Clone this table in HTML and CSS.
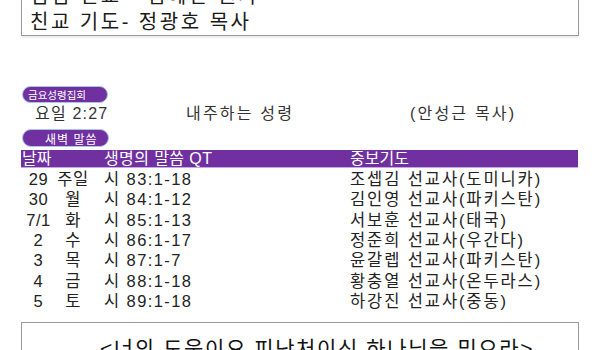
FILE: index.html
```html
<!DOCTYPE html>
<html lang="ko">
<head>
<meta charset="utf-8">
<link rel="stylesheet" href="styles.css">
</head>
<body>
<div class="page">
  <div class="notice">
    <div>점심 친교 - 김혜란 권사</div>
    <div>친교 기도- 정광호 목사</div>
  </div>

  <div class="pill pill-fri">금요성령집회</div>
  <div class="fri-row">
    <span class="fri-ref">요일 2:27</span>
    <span class="fri-title">내주하는 성령</span>
    <span class="fri-speaker">(안성근 목사)</span>
  </div>

  <div class="pill pill-dawn">새벽 말씀</div>
  <div class="qt">
    <div class="qt-head">
      <span class="h-date">날짜</span>
      <span class="h-verse">생명의 말씀 QT</span>
      <span class="h-pray">중보기도</span>
    </div>
    <div class="qt-row"><span class="c-num">29</span><span class="c-day">주일</span><span class="c-verse">시 83:1-18</span><span class="c-pray">조셉김 선교사(도미니카)</span></div>
    <div class="qt-row"><span class="c-num">30</span><span class="c-day">월</span><span class="c-verse">시 84:1-12</span><span class="c-pray">김인영 선교사(파키스탄)</span></div>
    <div class="qt-row"><span class="c-num">7/1</span><span class="c-day">화</span><span class="c-verse">시 85:1-13</span><span class="c-pray">서보훈 선교사(태국)</span></div>
    <div class="qt-row"><span class="c-num">2</span><span class="c-day">수</span><span class="c-verse">시 86:1-17</span><span class="c-pray">정준희 선교사(우간다)</span></div>
    <div class="qt-row"><span class="c-num">3</span><span class="c-day">목</span><span class="c-verse">시 87:1-7</span><span class="c-pray">윤갈렙 선교사(파키스탄)</span></div>
    <div class="qt-row"><span class="c-num">4</span><span class="c-day">금</span><span class="c-verse">시 88:1-18</span><span class="c-pray">황충열 선교사(온두라스)</span></div>
    <div class="qt-row"><span class="c-num">5</span><span class="c-day">토</span><span class="c-verse">시 89:1-18</span><span class="c-pray">하강진 선교사(중동)</span></div>
  </div>

  <div class="motto">&lt;너의 도움이요 피난처이신 하나님을 믿으라&gt;</div>
</div>
</body>
</html>
```
FILE: styles.css
```css
* { box-sizing: border-box; }
html, body { margin: 0; padding: 0; background: #fff; overflow: hidden; }
body {
  font-family: "Liberation Sans", "Noto Sans CJK KR", sans-serif;
  color: #222;
}
.page {
  width: 600px;
  height: 350px;
  padding: 0 21px;
  overflow: hidden;
}
.notice {
  margin-top: -19px;
  border: 1px solid #9a9a9a;
  box-shadow: 0 2px 2px rgba(0,0,0,0.08);
  padding: 1px 8px 0;
  font-size: 20px;
  line-height: 26px;
  letter-spacing: 2.5px;
  color: #1a1a1a;
  white-space: nowrap;
}
.pill {
  background: #7030a0;
  color: #fff;
  border: 1px solid #a9c6ea;
  border-radius: 10px;
  font-family: "Noto Sans CJK KR", sans-serif;
  display: flex;
  align-items: center;
  white-space: nowrap;
}
.pill-fri {
  margin-top: 50px;
  margin-left: 1px;
  width: 86px;
  height: 17px;
  font-size: 10.5px;
  padding-left: 5px;
}
.fri-row {
  display: flex;
  height: 22px;
  line-height: 22px;
  margin-bottom: 4px;
  font-size: 16px;
  letter-spacing: 2.2px;
  color: #333;
  white-space: nowrap;
}
.fri-ref { width: 165px; padding-left: 14px; letter-spacing: 1.2px; }
.fri-title { width: 224px; }
.pill-dawn {
  margin-left: 1px;
  width: 87px;
  height: 18px;
  font-size: 12px;
  padding-left: 22px;
  letter-spacing: 1px;
}
.qt { margin-top: 3px; }
.qt-head {
  display: grid;
  grid-template-columns: 83px 246px 1fr;
  width: 557px;
  height: 18px;
  background: #7030a0;
  border-bottom: 1px solid #c8a6e2;
  color: #fff;
  font-size: 16px;
  line-height: 17px;
  overflow: hidden;
  white-space: nowrap;
}
.h-date { padding-left: 1px; }
.h-verse { letter-spacing: 0.4px; }
.qt-row {
  display: grid;
  grid-template-columns: 34px 36px 13px 246px 1fr;
  height: 20.33px;
  line-height: 20.33px;
  font-size: 16.5px;
  color: #222;
  white-space: nowrap;
}
.c-num { text-align: center; padding-left: 1px; letter-spacing: 0.6px; }
.c-day { text-align: center; letter-spacing: 0.5px; }
.c-verse { grid-column: 4; letter-spacing: 1.4px; }
.c-pray { grid-column: 5; letter-spacing: 1.9px; }
.qt-row:nth-child(2) { margin-top: 1px; }
.motto {
  margin-top: 11px;
  border: 1px solid #9a9a9a;
  height: 60px;
  padding: 12px 0 0 78px;
  font-size: 21px;
  line-height: 28px;
  letter-spacing: 1.6px;
  color: #111;
  white-space: nowrap;
}
```
